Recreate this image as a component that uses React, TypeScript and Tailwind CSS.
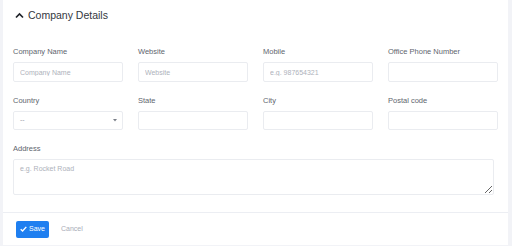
import { FC } from 'react';

const fields = [
  { label: 'Company Name', placeholder: 'Company Name' },
  { label: 'Website', placeholder: 'Website' },
  { label: 'Mobile', placeholder: 'e.g. 987654321' },
  { label: 'Office Phone Number', placeholder: '' },
];

const locationFields = ['State', 'City', 'Postal code'];

const Label: FC<{ title: string }> = ({ title }) => (
  <label className="block h-[12px] leading-[12px] text-[7.5px] text-[#60656e] mb-[4px]">{title}</label>
);

const inputClass =
  'block w-full h-[20px] rounded-[2px] border border-[#eaecf0] bg-white px-[6px] text-[7px] text-[#333] placeholder:text-[#aeb2bb] focus:outline-none';

const App: FC = () => {
  return (
    <div
      className="w-[512px] h-[246px] bg-[#f2f3f7] pl-[3px] pr-[4px] pb-[1px] overflow-hidden"
      style={{ fontFamily: '"Liberation Sans", Arial, sans-serif' }}
    >
      <div className="h-full bg-white flex flex-col">
        <div className="h-[32px] flex items-center pl-[12px] gap-[4px]">
          <svg width="9" height="7" viewBox="0 0 9 7" className="mt-[-1px]">
            <path d="M1 5.5 L4.5 2 L8 5.5" fill="none" stroke="#1f2329" strokeWidth="1.7" />
          </svg>
          <span className="text-[10.5px] text-[#33373e]">Company Details</span>
        </div>
        <div className="px-[10px] pt-[14px]">
          <div className="grid grid-cols-4 gap-x-[15px] gap-y-[13px]">
            {fields.map((item) => (
              <div key={item.label}>
                <Label title={item.label} />
                <input className={inputClass} placeholder={item.placeholder} />
              </div>
            ))}
            <div>
              <Label title="Country" />
              <div className="h-[19px] rounded-[2px] border border-[#eaecf0] flex items-center justify-between pl-[6px] pr-[5px]">
                <span className="text-[7px] text-[#9a9ea8]">--</span>
                <svg width="4" height="3" viewBox="0 0 4 3">
                  <path d="M0 0 L4 0 L2 2.5 Z" fill="#7a7f88" />
                </svg>
              </div>
            </div>
            {locationFields.map((item) => (
              <div key={item}>
                <Label title={item} />
                <input className="block w-full h-[19px] rounded-[2px] border border-[#eaecf0] bg-white focus:outline-none" />
              </div>
            ))}
          </div>
          <div className="mt-[13px]">
            <Label title="Address" />
            <textarea
              className="block w-[481px] h-[36px] rounded-[2px] border border-[#eaecf0] px-[6px] py-[4px] text-[7px] placeholder:text-[#aeb2bb] focus:outline-none"
              placeholder="e.g. Rocket Road"
            />
          </div>
        </div>
        <div className="mt-auto h-[33px] border-t border-[#eceef3] flex items-center pl-[13px] gap-[12px]">
          <button className="h-[17px] w-[33px] rounded-[2px] bg-[#1f7ff0] flex items-center justify-center gap-[2px] text-white text-[7px]">
            <svg width="7" height="6" viewBox="0 0 7 6">
              <path d="M0.7 3.2 L2.6 5 L6.3 0.9" fill="none" stroke="white" strokeWidth="1.4" />
            </svg>
            Save
          </button>
          <span className="text-[7px] text-[#a9adb8]">Cancel</span>
        </div>
      </div>
    </div>
  );
};

export default App;
